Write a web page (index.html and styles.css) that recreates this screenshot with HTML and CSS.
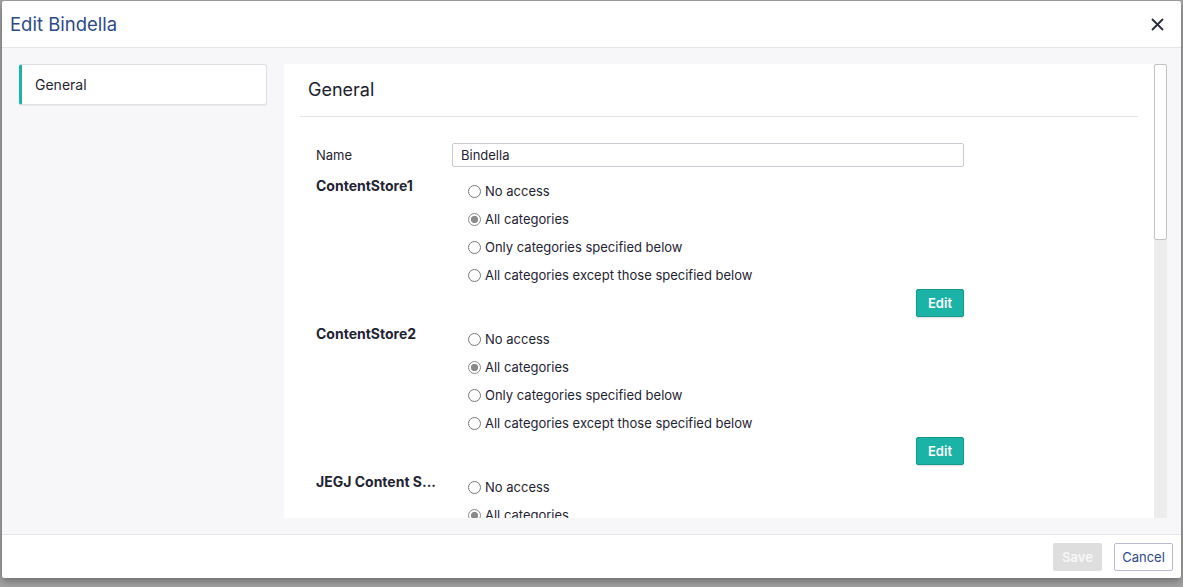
FILE: index.html
```
<html lang="en">
<head>
  <meta charset="UTF-8">
  <meta name="viewport" content="width=device-width, initial-scale=1.0">
  <title>Edit Bindella</title>
  <link rel="stylesheet" href="styles.css">
</head>
<body>
  <div class="modal">
    <div class="modal-header">
      <h1>Edit Bindella</h1>
      <button class="close" type="button" aria-label="Close">
        <svg width="13" height="13" viewBox="0 0 13 13"><path d="M1 1L12 12M12 1L1 12" stroke="#262b3d" stroke-width="1.8" fill="none"/></svg>
      </button>
    </div>

    <div class="modal-body">
      <div class="side-nav">
        <div class="nav-item active">General</div>
      </div>

      <div class="panel-wrap">
        <div class="panel">
          <h2>General</h2>
          <form class="form">
            <div class="row">
              <label class="field-label" for="name">Name</label>
              <input id="name" type="text" value="Bindella">
            </div>

            <div class="store">
              <div class="store-label">ContentStore1</div>
              <div class="store-options">
                <label class="radio"><input type="radio" name="cs1">No access</label>
                <label class="radio"><input type="radio" name="cs1" checked>All categories</label>
                <label class="radio"><input type="radio" name="cs1">Only categories specified below</label>
                <label class="radio"><input type="radio" name="cs1">All categories except those specified below</label>
                <div class="actions"><button class="btn-edit" type="button">Edit</button></div>
              </div>
            </div>

            <div class="store">
              <div class="store-label">ContentStore2</div>
              <div class="store-options">
                <label class="radio"><input type="radio" name="cs2">No access</label>
                <label class="radio"><input type="radio" name="cs2" checked>All categories</label>
                <label class="radio"><input type="radio" name="cs2">Only categories specified below</label>
                <label class="radio"><input type="radio" name="cs2">All categories except those specified below</label>
                <div class="actions"><button class="btn-edit" type="button">Edit</button></div>
              </div>
            </div>

            <div class="store">
              <div class="store-label">JEGJ Content S...</div>
              <div class="store-options">
                <label class="radio"><input type="radio" name="cs3">No access</label>
                <label class="radio"><input type="radio" name="cs3" checked>All categories</label>
              </div>
            </div>
          </form>
        </div>
        <div class="scrollbar">
          <div class="thumb"></div>
        </div>
      </div>
    </div>

    <div class="modal-footer">
      <button class="btn-save" type="button" disabled>Save</button>
      <button class="btn-cancel" type="button">Cancel</button>
    </div>
  </div>
</body>
</html>
```

FILE: styles.css
```
* {
  box-sizing: border-box;
}

body {
  font-family: Inter, "Noto Sans", Arial, sans-serif;
  margin: 0;
  padding: 1px 2px 0;
  height: 100vh;
  background-color: #a3a3a3;
  overflow: hidden;
}

.modal {
  background: #fff;
  height: 577px;
  display: flex;
  flex-direction: column;
  border-radius: 2px;
  box-shadow: 0 3px 8px rgba(0, 0, 0, 0.35);
}

.modal-header {
  height: 47px;
  flex: none;
  display: flex;
  align-items: center;
  justify-content: space-between;
  padding: 0 17px 0 8px;
  border-bottom: 1px solid #e4e5e8;
}

h1 {
  margin: 0;
  font-size: 18.5px;
  font-weight: 400;
  color: #2d4a8c;
}

.close {
  background: none;
  border: none;
  padding: 0;
  width: 13px;
  height: 13px;
  display: flex;
  cursor: pointer;
}

.modal-body {
  flex: 1;
  min-height: 0;
  display: flex;
  gap: 17px;
  padding: 16px 14px 16px 17px;
  background: #f7f7f9;
}

.side-nav {
  width: 248px;
  flex: none;
}

.nav-item {
  height: 41px;
  display: flex;
  align-items: center;
  padding-left: 13px;
  font-size: 14px;
  color: #1f2433;
  background: #fff;
  border: 1px solid #dfe0e3;
  border-left: 3px solid #1ab5a8;
  border-radius: 3px;
  box-shadow: 0 1px 1px rgba(0, 0, 0, 0.06);
}

.panel-wrap {
  flex: 1;
  display: flex;
  background: #fff;
  min-width: 0;
}

.panel {
  flex: 1;
  overflow: hidden;
  padding: 0 16px;
}

.scrollbar {
  width: 13px;
  flex: none;
  background: #ededed;
}

.thumb {
  height: 176px;
  background: #fff;
  border: 1px solid #c3c3c3;
  border-radius: 2px;
}

h2 {
  margin: 0;
  padding: 15px 8px 15px;
  font-size: 18px;
  line-height: 22px;
  font-weight: 400;
  color: #1d2130;
  border-bottom: 1px solid #e2e3e6;
}

.form {
  padding: 26px 0 22px 16px;
  font-size: 13px;
  color: #1f2433;
}

.row {
  display: flex;
  align-items: center;
  margin-bottom: 10px;
}

.field-label,
.store-label {
  width: 136px;
  flex: none;
  padding-right: 12px;
}

.row input {
  width: 512px;
  height: 24px;
  padding: 0 8px;
  border: 1px solid #c9cad0;
  border-radius: 2px;
  font-family: inherit;
  font-size: 13px;
  color: #1f2433;
}

.store {
  display: flex;
  align-items: flex-start;
  margin-bottom: 8px;
}

.store-label {
  font-size: 14px;
  font-weight: 700;
  line-height: 17px;
  white-space: nowrap;
  overflow: hidden;
}

.store-options {
  width: 512px;
  padding-left: 16px;
}

.radio {
  display: flex;
  align-items: center;
  height: 28px;
}

.radio input {
  appearance: none;
  -webkit-appearance: none;
  width: 13px;
  height: 13px;
  margin: 0 4px 0 0;
  border: 1px solid #777;
  border-radius: 50%;
  background: #fff;
}

.radio input:checked {
  border-color: #8a8a8a;
  background: radial-gradient(circle, #8a8a8a 0 3.3px, #fff 4px);
}

.actions {
  display: flex;
  justify-content: flex-end;
}

.btn-edit {
  width: 48px;
  height: 28px;
  background: #1ab3a6;
  border: 1px solid #14998e;
  border-radius: 2px;
  color: #fff;
  font-family: inherit;
  font-size: 13px;
  font-weight: 600;
  box-shadow: 0 1px 2px rgba(0, 0, 0, 0.15);
  cursor: pointer;
}

.modal-footer {
  height: 44px;
  flex: none;
  display: flex;
  align-items: center;
  justify-content: flex-end;
  gap: 12px;
  padding: 0 8px;
  border-top: 1px solid #e4e5e8;
}

.btn-save {
  width: 49px;
  height: 28px;
  background: #dedede;
  border: none;
  border-radius: 2px;
  color: #f7f7f7;
  font-family: inherit;
  font-size: 13px;
  font-weight: 600;
}

.btn-cancel {
  width: 59px;
  height: 28px;
  background: #fff;
  border: 1px solid #b8bbd2;
  border-radius: 2px;
  color: #2d4a8c;
  font-family: inherit;
  font-size: 13px;
  cursor: pointer;
}
```
